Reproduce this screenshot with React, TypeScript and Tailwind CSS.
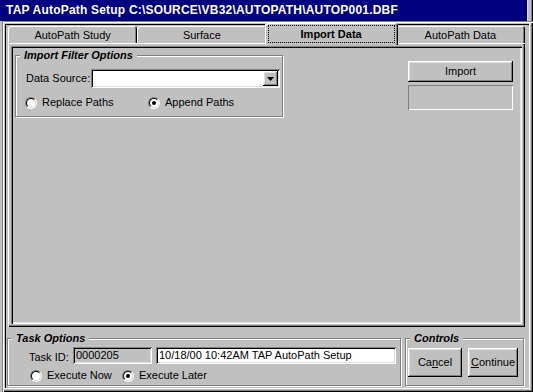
import React from "react"

const raised =
  "shadow-[inset_-1px_-1px_#000,inset_1px_1px_#fff,inset_-2px_-2px_#808080,inset_2px_2px_#dfdfdf]"
const field =
  "shadow-[inset_1px_1px_#808080,inset_-1px_-1px_#fff,inset_2px_2px_#000,inset_-2px_-2px_#dfdfdf]"
const tabEdge = "shadow-[inset_1px_1px_#fff,inset_-1px_0_#000,inset_-2px_0_#808080]"

function Radio({ checked, label }: { checked?: boolean; label: string }) {
  return (
    <div className="flex items-center gap-[5px]">
      <span className="flex h-[12px] w-[12px] items-center justify-center rounded-full border border-t-[#808080] border-l-[#808080] border-b-white border-r-white">
        <span className="flex h-[10px] w-[10px] items-center justify-center rounded-full border border-t-black border-l-black border-b-[#dfdfdf] border-r-[#dfdfdf] bg-white">
          {checked && <span className="h-[4px] w-[4px] rounded-full bg-black" />}
        </span>
      </span>
      <span>{label}</span>
    </div>
  )
}

function Group({
  label,
  className = "",
  children,
}: {
  label: string
  className?: string
  children?: React.ReactNode
}) {
  return (
    <div className={`relative border border-[#808080] shadow-[inset_1px_1px_#fff,1px_1px_#fff] ${className}`}>
      <span className="absolute left-[4px] top-[-8px] bg-[#c0c0c0] px-[4px] text-[11px] font-bold italic leading-[14px]">
        {label}
      </span>
      {children}
    </div>
  )
}

const tabs = ["AutoPath Study", "Surface", "Import Data", "AutoPath Data"]

export default function App() {
  return (
    <div className="flex h-[392px] w-[533px] flex-col overflow-hidden bg-[#c0c0c0] font-['Liberation_Sans',Arial,sans-serif] text-[11px] leading-[13px] text-black">
      {/* title */}
      <div className="flex h-[21px]">
        <div className="flex flex-1 items-center bg-[#000080] pl-[6px] text-[12px] font-bold tracking-[0.2px] text-white">
          TAP AutoPath Setup C:\SOURCE\VB32\AUTOPATH\AUTOP001.DBF
        </div>
        <div className="w-[6px] shadow-[inset_1px_0_#dfdfdf,inset_-1px_0_#000,inset_-2px_0_#808080]" />
      </div>

      {/* outer frame */}
      <div className="ml-[2px] flex flex-1 flex-col shadow-[inset_1px_1px_#808080,inset_2px_2px_#fff,inset_-1px_-1px_#000,inset_-2px_-2px_#808080,inset_-3px_-3px_#c0c0c0,inset_-4px_-4px_#fff,inset_3px_3px_#c0c0c0,inset_4px_4px_#000]">
        {/* tab control */}
        <div className="ml-[6px] mr-[8px] mt-[2px] flex flex-col">
          <div className="grid h-[20px] grid-cols-4 items-end">
            {tabs.map((t, i) =>
              i === 2 ? (
                <div
                  key={t}
                  className={`relative z-10 -mx-[2px] -mb-[2px] flex h-[22px] rounded-t-[3px] bg-[#c0c0c0] px-[3px] pb-[2px] pt-[2px] ${tabEdge}`}
                >
                  <div className="flex flex-1 items-center justify-center border border-dotted border-black font-bold">
                    {t}
                  </div>
                </div>
              ) : (
                <div
                  key={t}
                  className={`flex h-[17px] items-center justify-center rounded-t-[3px] pt-[1px] ${tabEdge}`}
                >
                  {t}
                </div>
              )
            )}
          </div>

          {/* panel */}
          <div className="h-[284px] p-[3px] shadow-[inset_1px_1px_#fff,inset_-1px_-1px_#000,inset_-2px_-2px_#808080]">
            <div className="flex h-full justify-between pl-[4px] pr-[9px] pt-[9px] shadow-[inset_1px_1px_#808080,inset_2px_2px_#000,inset_-1px_-1px_#fff,inset_-2px_-2px_#dfdfdf]">
              <Group label="Import Filter Options" className="h-[62px] w-[268px]">
                <div className="flex items-center pl-[10px] pt-[13px]">
                  <span className="w-[65px]">Data Source:</span>
                  <div className={`flex h-[19px] w-[189px] items-center justify-end bg-white p-[2px] ${field}`}>
                    <div className={`flex h-[15px] w-[15px] items-center justify-center bg-[#c0c0c0] ${raised}`}>
                      <svg width="7" height="4" viewBox="0 0 7 4">
                        <path d="M0 0h7L3.5 4z" fill="#000" />
                      </svg>
                    </div>
                  </div>
                </div>
                <div className="mt-[8px] flex items-center pl-[9px]">
                  <div className="w-[123px]">
                    <Radio label="Replace Paths" />
                  </div>
                  <Radio checked label="Append Paths" />
                </div>
              </Group>

              <div className="flex w-[105px] flex-col pt-[6px]">
                <div className={`flex h-[21px] items-center justify-center ${raised}`}>Import</div>
                <div className="mt-[3px] h-[25px] shadow-[inset_1px_1px_#808080,inset_-1px_-1px_#fff]" />
              </div>
            </div>
          </div>
        </div>

        {/* bottom */}
        <div className="ml-[5px] mt-[11px] flex gap-[4px]">
          <Group label="Task Options" className="h-[48px] w-[394px]">
            <div className="flex items-center pl-[21px] pt-[8px]">
              <span className="w-[44px] pt-[3px]">Task ID:</span>
              <div className={`flex h-[17px] w-[79px] items-center px-[3px] ${field}`}>0000205</div>
              <div className={`ml-[4px] flex h-[17px] w-[240px] items-center bg-white px-[3px] ${field}`}>
                10/18/00 10:42AM TAP AutoPath Setup
              </div>
            </div>
            <div className="mt-[5px] flex items-center pl-[22px]">
              <div className="w-[92px]">
                <Radio label="Execute Now" />
              </div>
              <Radio checked label="Execute Later" />
            </div>
          </Group>

          <Group label="Controls" className="h-[48px] w-[119px]">
            <div className="flex gap-[6px] pl-[2px] pt-[9px]">
              <div className={`flex h-[29px] w-[54px] items-center justify-center ${raised}`}>
                <span>
                  Ca<span className="underline">n</span>cel
                </span>
              </div>
              <div className={`flex h-[29px] w-[50px] items-center justify-center ${raised}`}>
                <span>
                  <span className="underline">C</span>ontinue
                </span>
              </div>
            </div>
          </Group>
        </div>
      </div>
    </div>
  )
}
